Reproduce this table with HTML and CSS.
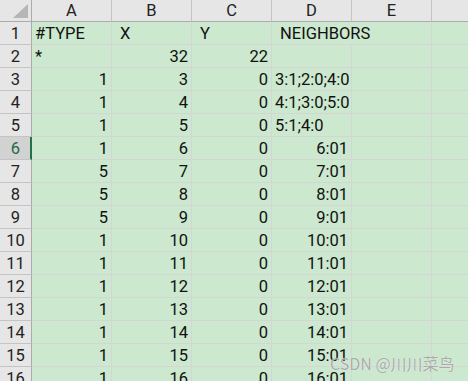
FILE: index.html
```html
<!DOCTYPE html>
<html>
<head>
<meta charset="utf-8">
<link rel="stylesheet" href="styles.css">
</head>
<body>
<div class="sheet">
  <div class="grid">
    <div class="corner"><span class="tri"></span></div>
    <div class="ch">A</div><div class="ch">B</div><div class="ch">C</div><div class="ch">D</div><div class="ch">E</div><div class="ch last"></div>

    <div class="rh">1</div><div class="c">#TYPE</div><div class="c ind">X</div><div class="c ind">Y</div><div class="c ind spill">NEIGHBORS</div><div class="c"></div><div class="c last"></div>
    <div class="rh">2</div><div class="c">*</div><div class="c r">32</div><div class="c r">22</div><div class="c"></div><div class="c"></div><div class="c last"></div>
    <div class="rh">3</div><div class="c r">1</div><div class="c r">3</div><div class="c r">0</div><div class="c">3:1;2:0;4:0</div><div class="c"></div><div class="c last"></div>
    <div class="rh">4</div><div class="c r">1</div><div class="c r">4</div><div class="c r">0</div><div class="c">4:1;3:0;5:0</div><div class="c"></div><div class="c last"></div>
    <div class="rh">5</div><div class="c r">1</div><div class="c r">5</div><div class="c r">0</div><div class="c">5:1;4:0</div><div class="c"></div><div class="c last"></div>
    <div class="rh sel">6</div><div class="c r">1</div><div class="c r">6</div><div class="c r">0</div><div class="c r">6:01</div><div class="c"></div><div class="c last"></div>
    <div class="rh">7</div><div class="c r">5</div><div class="c r">7</div><div class="c r">0</div><div class="c r">7:01</div><div class="c"></div><div class="c last"></div>
    <div class="rh">8</div><div class="c r">5</div><div class="c r">8</div><div class="c r">0</div><div class="c r">8:01</div><div class="c"></div><div class="c last"></div>
    <div class="rh">9</div><div class="c r">5</div><div class="c r">9</div><div class="c r">0</div><div class="c r">9:01</div><div class="c"></div><div class="c last"></div>
    <div class="rh">10</div><div class="c r">1</div><div class="c r">10</div><div class="c r">0</div><div class="c r">10:01</div><div class="c"></div><div class="c last"></div>
    <div class="rh">11</div><div class="c r">1</div><div class="c r">11</div><div class="c r">0</div><div class="c r">11:01</div><div class="c"></div><div class="c last"></div>
    <div class="rh">12</div><div class="c r">1</div><div class="c r">12</div><div class="c r">0</div><div class="c r">12:01</div><div class="c"></div><div class="c last"></div>
    <div class="rh">13</div><div class="c r">1</div><div class="c r">13</div><div class="c r">0</div><div class="c r">13:01</div><div class="c"></div><div class="c last"></div>
    <div class="rh">14</div><div class="c r">1</div><div class="c r">14</div><div class="c r">0</div><div class="c r">14:01</div><div class="c"></div><div class="c last"></div>
    <div class="rh">15</div><div class="c r">1</div><div class="c r">15</div><div class="c r">0</div><div class="c r">15:01</div><div class="c"></div><div class="c last"></div>
    <div class="rh">16</div><div class="c r">1</div><div class="c r">16</div><div class="c r">0</div><div class="c r">16:01</div><div class="c"></div><div class="c last"></div>
  </div>
  <div class="watermark">CSDN @川川菜鸟</div>
</div>
</body>
</html>
```
FILE: styles.css
```css
html, body {
  margin: 0;
  padding: 0;
  overflow: hidden;
  background: #cce8cf;
}
.sheet {
  position: relative;
  width: 468px;
  height: 381px;
  overflow: hidden;
  font-family: Roboto, "Liberation Sans", "Noto Sans CJK SC", sans-serif;
  font-size: 16.5px;
  color: #111;
}
.grid {
  display: grid;
  grid-template-columns: 32px repeat(5, 80px) 1fr;
  grid-template-rows: 22px repeat(16, 23px);
}
.grid > div {
  box-sizing: border-box;
  white-space: nowrap;
}
.corner {
  background: #e6e6e6;
  border-right: 1px solid #ababab;
  border-bottom: 1px solid #ababab;
  position: relative;
}
.tri {
  position: absolute;
  left: 13px;
  top: 4px;
  width: 0;
  height: 0;
  border-left: 15px solid transparent;
  border-bottom: 14px solid #b6b6b6;
}
.ch {
  background: #e6e6e6;
  border-right: 1px solid #c4c4c4;
  border-bottom: 1px solid #ababab;
  text-align: center;
  line-height: 22px;
  color: #222;
}
.ch.last { border-right: none; }
.rh {
  background: #e6e6e6;
  border-right: 1px solid #ababab;
  border-bottom: 1px solid #c4c4c4;
  text-align: center;
  line-height: 24px;
  color: #222;
}
.rh.sel {
  background: #d2d2d2;
  color: #1e6b44;
  border-right: 2px solid #217346;
  padding-left: 1px;
}
.c {
  background: #cce8cf;
  border-right: 1px solid #d5d5d5;
  border-bottom: 1px solid #d5d5d5;
  padding: 0 3px;
  line-height: 24px;
  overflow: visible;
}
.c.last { border-right: none; }
.c.r { text-align: right; padding-right: 3px; }
.c.ind { padding-left: 8px; }
.c.spill {
  border-right-color: #cce8cf;
  position: relative;
  z-index: 1;
}
.watermark {
  position: absolute;
  left: 330px;
  top: 353px;
  z-index: 2;
  font-family: "Noto Sans CJK SC", "Liberation Sans", sans-serif;
  font-size: 16px;
  line-height: 20px;
  color: rgba(150, 150, 150, 0.8);
  text-shadow: 0 0 1px rgba(255, 255, 255, 0.9);
  white-space: nowrap;
}
```
